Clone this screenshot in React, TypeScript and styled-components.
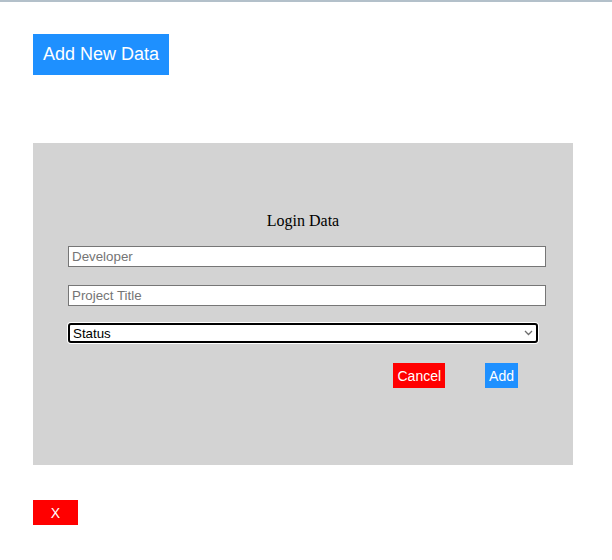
import React from "react";
import styled, { createGlobalStyle } from "styled-components";

const Global = createGlobalStyle`
  html, body { margin: 0; padding: 0; background: #fff; }
  body { font-family: "Liberation Serif", "Times New Roman", serif; }
`;

const Page = styled.div`
  border-top: 2px solid #b3c0ca;
  padding: 32px 39px 0 33px;
  display: flex;
  flex-direction: column;
  align-items: flex-start;
`;

const Button = styled.button<{ $tone: "blue" | "red" }>`
  background: ${(p) => (p.$tone === "blue" ? "#1e90ff" : "#ff0000")};
  color: #fff;
  border: none;
  border-radius: 0;
  font-family: "Liberation Sans", Arial, sans-serif;
  font-size: 14px;
  height: 25px;
  padding: 0 4px;
  margin: 0;
  cursor: pointer;
`;

const BigButton = styled(Button)`
  font-size: 18px;
  height: 41px;
  padding: 0 10px;
`;

const CloseButton = styled(Button)`
  width: 45px;
  margin-top: 35px;
`;

const Panel = styled.div`
  align-self: stretch;
  box-sizing: border-box;
  width: 540px;
  height: 322px;
  margin-top: 68px;
  background: #d3d3d3;
  padding: 69px 35px 0;
  display: flex;
  flex-direction: column;
`;

const Title = styled.div`
  font-size: 16px;
  line-height: 18px;
  text-align: center;
  color: #000;
  margin-bottom: 16px;
`;

const Input = styled.input<{ $gap: number }>`
  display: block;
  width: 100%;
  box-sizing: content-box;
  height: 17px;
  padding: 1px 3px;
  border: 1px solid #767676;
  margin: 0 0 ${(p) => p.$gap}px;
  font-family: "Liberation Sans", Arial, sans-serif;
  font-size: 13.333px;
  background: #fff;
  outline: none;
  &::placeholder { color: #757575; }
`;

const SelectWrap = styled.div`
  position: relative;
  width: 470px;
  height: 20px;
`;

const Select = styled.select`
  display: block;
  appearance: none;
  width: 470px;
  height: 20px;
  box-sizing: border-box;
  border: 2px solid #000;
  border-radius: 3px;
  box-shadow: 0 0 0 1px #fff;
  outline: none;
  padding: 0 20px 0 3px;
  font-family: "Liberation Sans", Arial, sans-serif;
  font-size: 13.333px;
  color: #000;
  background: #fff;
`;

const Chevron = styled.svg`
  position: absolute;
  right: 5px;
  top: 7px;
  width: 9px;
  height: 6px;
  pointer-events: none;
`;

const Actions = styled.div`
  display: flex;
  justify-content: flex-end;
  gap: 40px;
  padding-right: 20px;
  margin-top: 20px;
`;

export default function App() {
  return (
    <>
      <Global />
      <Page>
        <BigButton $tone="blue">Add New Data</BigButton>
        <Panel>
          <Title>Login Data</Title>
          <Input $gap={18} type="text" placeholder="Developer" />
          <Input $gap={17} type="text" placeholder="Project Title" />
          <SelectWrap>
            <Select defaultValue="">
              <option value="">Status</option>
              <option value="active">Active</option>
              <option value="done">Done</option>
            </Select>
            <Chevron viewBox="0 0 9 6">
              <path d="M1 1 L4.5 4.5 L8 1" fill="none" stroke="#6d6d6d" strokeWidth="1.3" />
            </Chevron>
          </SelectWrap>
          <Actions>
            <Button $tone="red">Cancel</Button>
            <Button $tone="blue">Add</Button>
          </Actions>
        </Panel>
        <CloseButton $tone="red">X</CloseButton>
      </Page>
    </>
  );
}
